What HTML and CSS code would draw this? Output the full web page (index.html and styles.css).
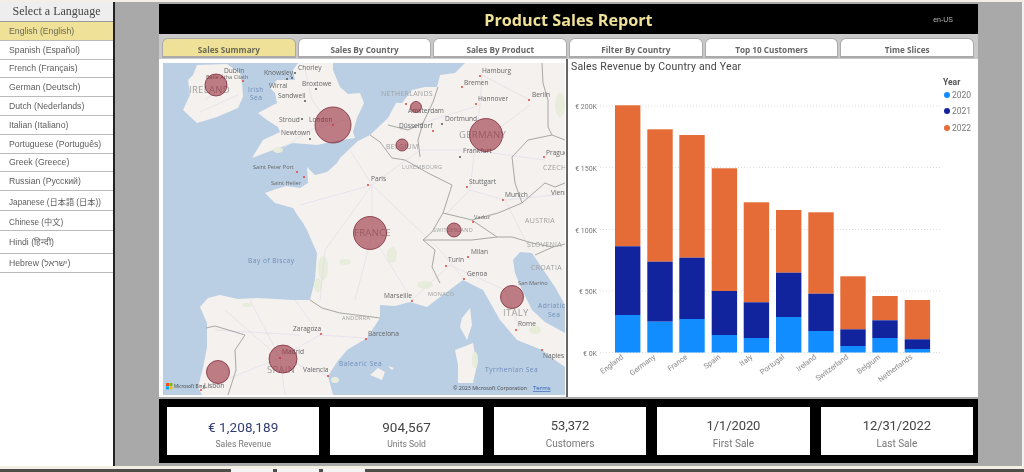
FILE: index.html
```html
<!DOCTYPE html>
<html lang="en">
<head>
    <meta charset="UTF-8">
    <meta name="viewport" content="width=device-width, initial-scale=1.0">
    <title>Product Sales Report</title>
    <link rel="stylesheet" href="styles.css">
</head>
<body>

    <div class="app">
        <aside class="lang-panel">
            <div class="lang-title">Select a Language</div>
            <a class="lang-item active">English (English)</a>
            <a class="lang-item">Spanish (Español)</a>
            <a class="lang-item">French (Français)</a>
            <a class="lang-item">German (Deutsch)</a>
            <a class="lang-item">Dutch (Nederlands)</a>
            <a class="lang-item">Italian (Italiano)</a>
            <a class="lang-item">Portuguese (Português)</a>
            <a class="lang-item">Greek (Greece)</a>
            <a class="lang-item">Russian (Русский)</a>
            <a class="lang-item tall">Japanese (日本語 (日本))</a>
            <a class="lang-item tall">Chinese (中文)</a>
            <a class="lang-item taller">Hindi (हिन्दी)</a>
            <a class="lang-item">Hebrew (ישראל)</a>
        </aside>

        <main class="stage">
            <div class="report">
                <header class="report-header">
                    <h1>Product Sales Report</h1>
                    <span class="locale">en-US</span>
                </header>

                <nav class="tabs">
                    <a class="tab active">Sales Summary</a>
                    <a class="tab">Sales By Country</a>
                    <a class="tab">Sales By Product</a>
                    <a class="tab">Filter By Country</a>
                    <a class="tab">Top 10 Customers</a>
                    <a class="tab">Time Slices</a>
                </nav>

                <section class="visuals">
                    <div class="map-frame">
                        <svg class="map" viewBox="163 63 402 332" width="402" height="332">
                            <rect class="water" x="163" y="63" width="402" height="332"/>

                            <!-- land -->
                            <path class="land" d="M465 63 L455 73 L440 75 L437 87 L425 87 L412 90 L402 103 L396 103 L388 118 L370 135 L358 141 L340 158 L337 163 L327 172 L315 175 L307 167 L308 183 L300 188 L286 186 L273 190 L265 193 L275 203 L293 208 L298 216 L303 223 L307 230 L317 253 L315 280 L310 300 L293 300 L275 299 L257 298 L238 299 L220 295 L208 298 L200 307 L207 323 L207 347 L203 368 L198 387 L202 395 L333 395 L328 376 L337 362 L347 350 L367 338 L380 318 L380 305 L395 306 L410 302 L427 307 L440 297 L463 280 L483 290 L500 320 L517 340 L542 350 L552 358 L565 367 L565 63 Z"/>
                            <path class="land" d="M298 63 L333 63 L333 70 L340 87 L348 94 L360 93 L364 103 L357 118 L353 132 L355 138 L335 141 L317 145 L293 143 L273 150 L252 158 L263 140 L280 132 L278 127 L267 120 L258 113 L277 103 L275 93 L270 88 L277 80 L295 80 L293 70 Z"/>
                            <path class="land" d="M197 65 L193 75 L188 80 L190 95 L183 110 L197 123 L217 117 L238 108 L243 97 L242 83 L240 73 L227 64 Z"/>
                            <path class="land" d="M470 308 L472 325 L467 340 L460 327 L462 318 Z"/>
                            <path class="land" d="M455 350 L473 343 L477 365 L473 383 L458 383 L458 365 Z"/>
                            <path class="land" d="M378 368 L370 375 L382 380 L385 372 Z"/>
                            <path class="land" d="M388 366 L394 368 L392 370 Z"/>
                            <path class="water" d="M513 260 L520 252 L532 253 L540 265 L555 287 L565 305 L565 333 L545 322 L532 310 L522 290 L515 273 Z"/>

                            <!-- green patches -->
                            <g class="green">
                                <ellipse cx="323" cy="268" rx="5" ry="12"/>
                                <ellipse cx="318" cy="285" rx="4" ry="7"/>
                                <ellipse cx="345" cy="262" rx="6" ry="3"/>
                                <ellipse cx="392" cy="255" rx="5" ry="8"/>
                                <ellipse cx="425" cy="285" rx="8" ry="4"/>
                                <ellipse cx="335" cy="380" rx="4" ry="3"/>
                                <ellipse cx="475" cy="360" rx="3" ry="8"/>
                                <ellipse cx="535" cy="330" rx="6" ry="4"/>
                                <ellipse cx="560" cy="105" rx="5" ry="12"/>
                                <ellipse cx="247" cy="305" rx="5" ry="2"/>
                                <ellipse cx="278" cy="150" rx="5" ry="3"/>
                            </g>

                            <!-- roads -->
                            <path class="roads" d="M205 100 L225 85 M200 112 L238 95 M280 150 L310 130 L345 120 M305 70 L312 100 L330 125 M350 150 L372 185 L372 235 L355 300 M372 185 L420 150 L470 150 L530 105 M372 185 L300 205 M372 185 L325 250 L320 300 M372 185 L440 250 L464 279 M400 130 L480 105 L482 75 M480 105 L470 190 L505 200 M482 75 L530 100 M470 150 L545 160 M470 190 L445 215 M372 235 L412 300 M412 300 L450 265 L505 290 L520 330 M225 310 L280 358 L320 335 L365 338 M280 358 L205 388 M280 358 L328 376 M280 358 L250 300 M280 358 L285 395 M320 335 L295 300 M215 330 L300 335 M505 200 L555 195 M505 200 L530 250"/>

                            <!-- borders -->
                            <path class="border-line" d="M310 300 L322 308 L340 313 L365 316 L380 318 M206 328 L215 326 L235 332 L245 335 L235 350 L236 370 L228 395 M370 135 L380 142 L392 158 L405 160 L428 173 L452 185 L443 213 L432 232 L423 240 L435 250 L432 267 L440 283 M443 213 L472 220 L498 213 L522 203 L515 183 L512 157 L528 140 L552 135 L565 140 M542 63 L543 83 L548 100 L548 127 L552 135 M438 87 L433 102 L423 123 L418 140 L420 157 M388 125 L408 130 L423 123 M423 240 L445 240 L472 240 L497 237 L512 237 L532 243 L553 247 L565 244 M472 220 L497 237 M522 203 L545 183 L555 187 L565 183 M535 255 L553 247"/>

                            <!-- place labels -->
                            <g class="place">
                                <text x="224" y="73">Dublin</text>
                                <text x="206" y="79" class="tiny">Baile Átha Cliath</text>
                                <text x="264" y="75">Knowsley</text>
                                <text x="298" y="70">Chorley</text>
                                <text x="269" y="88">Wirral</text>
                                <text x="302" y="86">Broxtowe</text>
                                <text x="278" y="98">Sandwell</text>
                                <text x="279" y="122">Stroud</text>
                                <text x="309" y="122">London</text>
                                <text x="281" y="135">Newtown</text>
                                <text x="253" y="169" class="tiny">Saint Peter Port</text>
                                <text x="271" y="185" class="tiny">Saint Helier</text>
                                <text x="482" y="73">Hamburg</text>
                                <text x="464" y="85">Bremen</text>
                                <text x="478" y="101">Hannover</text>
                                <text x="532" y="97">Berlin</text>
                                <text x="408" y="113">Amsterdam</text>
                                <text x="445" y="121">Dortmund</text>
                                <text x="399" y="128">Düsseldorf</text>
                                <text x="463" y="153">Frankfurt</text>
                                <text x="546" y="155">Prague</text>
                                <text x="371" y="181">Paris</text>
                                <text x="469" y="184">Stuttgart</text>
                                <text x="505" y="197">Munich</text>
                                <text x="551" y="195">Vienna</text>
                                <text x="474" y="219" class="tiny">Vaduz</text>
                                <text x="471" y="254">Milan</text>
                                <text x="448" y="262">Turin</text>
                                <text x="467" y="276">Genoa</text>
                                <text x="518" y="285" class="tiny">San Marino</text>
                                <text x="384" y="298">Marseille</text>
                                <text x="518" y="326">Rome</text>
                                <text x="368" y="336">Barcelona</text>
                                <text x="543" y="358">Naples</text>
                                <text x="293" y="331">Zaragoza</text>
                                <text x="282" y="354">Madrid</text>
                                <text x="303" y="372">Valencia</text>
                                <text x="204" y="388">Lisbon</text>
                            </g>
                            <g class="country">
                                <text x="189" y="93" class="big">IRELAND</text>
                                <text x="381" y="96">NETHERLANDS</text>
                                <text x="386" y="149">BELGIUM</text>
                                <text x="459" y="138" class="big">GERMANY</text>
                                <text x="402" y="169" class="small">LUXEMBOURG</text>
                                <text x="543" y="170">CZECH</text>
                                <text x="525" y="223">AUSTRIA</text>
                                <text x="433" y="232" class="small">SWITZERLAND</text>
                                <text x="354" y="236" class="big">FRANCE</text>
                                <text x="527" y="247">SLOVENIA</text>
                                <text x="531" y="270">CROATIA</text>
                                <text x="428" y="296" class="small">MONACO</text>
                                <text x="342" y="320" class="small">ANDORRA</text>
                                <text x="503" y="316" class="big">ITALY</text>
                                <text x="267" y="373" class="big">SPAIN</text>
                            </g>
                            <g class="sea">
                                <text x="248" y="92">Irish</text>
                                <text x="250" y="100">Sea</text>
                                <text x="248" y="263">Bay of Biscay</text>
                                <text x="538" y="308">Adriatic</text>
                                <text x="548" y="317">Sea</text>
                                <text x="339" y="366">Balearic Sea</text>
                                <text x="485" y="372">Tyrrhenian Sea</text>
                            </g>

                            <!-- city dots -->
                            <g class="dot-red">
                                <circle cx="243" cy="81" r="1"/><circle cx="297" cy="172" r="1"/><circle cx="304" cy="177" r="1"/>
                                <circle cx="480" cy="76" r="1"/><circle cx="462" cy="87" r="1"/><circle cx="476" cy="104" r="1"/>
                                <circle cx="529" cy="100" r="1"/><circle cx="406" cy="104" r="1"/><circle cx="433" cy="131" r="1"/>
                                <circle cx="544" cy="157" r="1"/><circle cx="368" cy="185" r="1"/><circle cx="467" cy="187" r="1"/>
                                <circle cx="503" cy="200" r="1"/><circle cx="473" cy="222" r="1"/><circle cx="468" cy="257" r="1"/>
                                <circle cx="446" cy="266" r="1"/><circle cx="464" cy="279" r="1"/><circle cx="412" cy="301" r="1"/>
                                <circle cx="516" cy="330" r="1"/><circle cx="366" cy="339" r="1"/><circle cx="542" cy="350" r="1"/>
                                <circle cx="321" cy="334" r="1"/><circle cx="328" cy="376" r="1"/><circle cx="201" cy="390" r="1"/>
                            </g>
                            <g class="dot-dark">
                                <circle cx="295" cy="73" r="1"/><circle cx="287" cy="79" r="1"/><circle cx="292" cy="78" r="1"/>
                                <circle cx="316" cy="89" r="1"/><circle cx="305" cy="101" r="1"/><circle cx="302" cy="119" r="1"/>
                                <circle cx="310" cy="139" r="1"/><circle cx="442" cy="124" r="1"/><circle cx="460" cy="157" r="1"/>
                            </g>

                            <!-- revenue bubbles -->
                            <g class="bubble">
                                <circle cx="216" cy="85" r="11"/>
                                <circle cx="333" cy="125" r="18"/>
                                <circle cx="416" cy="107" r="5.5"/>
                                <circle cx="402" cy="145" r="6"/>
                                <circle cx="486" cy="135" r="16.5"/>
                                <circle cx="370" cy="233" r="16.5"/>
                                <circle cx="454" cy="230" r="7"/>
                                <circle cx="512" cy="297" r="11.5"/>
                                <circle cx="283" cy="359" r="14"/>
                                <circle cx="218" cy="372" r="11.5"/>
                            </g>
                            <circle class="centre" cx="333" cy="125" r="1"/>
                            <circle class="centre" cx="280" cy="358" r="1"/>

                            <!-- bing logo and credit -->
                            <rect x="166" y="383" width="3" height="3" fill="#f25022"/>
                            <rect x="169.400" y="383" width="3" height="3" fill="#7fba00"/>
                            <rect x="166" y="386.400" width="3" height="3" fill="#00a4ef"/>
                            <rect x="169.400" y="386.400" width="3" height="3" fill="#ffb900"/>
                            <text class="credit bing" x="174" y="388">Microsoft Bing</text>
                            <text class="credit" x="453" y="390">© 2023 Microsoft Corporation</text>
                            <text class="terms" x="533" y="390">Terms</text>
                        </svg>
                    </div>

                    <div class="chart-frame">
                        <h2 class="chart-title">Sales Revenue by Country and Year</h2>
                        <svg class="chart" viewBox="569 59 409 338" width="409" height="338">
                            <g class="grid-line">
                                <line x1="600" x2="942" y1="106" y2="106"/>
                                <line x1="600" x2="942" y1="167.500" y2="167.500"/>
                                <line x1="600" x2="942" y1="229.500" y2="229.500"/>
                                <line x1="600" x2="942" y1="291" y2="291"/>
                                <line x1="600" x2="942" y1="352.500" y2="352.500"/>
                            </g>
                            <g class="y-label">
                                <text x="597" y="109">€ 200K</text>
                                <text x="597" y="170.500">€ 150K</text>
                                <text x="597" y="232.500">€ 100K</text>
                                <text x="597" y="294">€ 50K</text>
                                <text x="597" y="355.500">€ 0K</text>
                            </g>

                            <!-- 2022 -->
                            <g fill="#e66c37">
                                <rect x="615" y="105.300" width="25.400" height="141"/>
                                <rect x="647.300" y="129.300" width="25.400" height="132.400"/>
                                <rect x="679.300" y="135" width="25.400" height="122.700"/>
                                <rect x="711.700" y="168.300" width="25.400" height="122.700"/>
                                <rect x="743.700" y="202.300" width="25.400" height="100"/>
                                <rect x="776" y="210" width="25.400" height="62.700"/>
                                <rect x="808.300" y="212.300" width="25.400" height="81.400"/>
                                <rect x="840.300" y="276.300" width="25.400" height="53"/>
                                <rect x="872.300" y="296" width="25.400" height="24.300"/>
                                <rect x="904.700" y="300" width="25.400" height="39.300"/>
                            </g>
                            <!-- 2021 -->
                            <g fill="#12239e">
                                <rect x="615" y="246.300" width="25.400" height="68.700"/>
                                <rect x="647.300" y="261.700" width="25.400" height="60"/>
                                <rect x="679.300" y="257.700" width="25.400" height="61.300"/>
                                <rect x="711.700" y="291" width="25.400" height="44"/>
                                <rect x="743.700" y="302.300" width="25.400" height="35.700"/>
                                <rect x="776" y="272.700" width="25.400" height="44.300"/>
                                <rect x="808.300" y="293.700" width="25.400" height="37.300"/>
                                <rect x="840.300" y="329.300" width="25.400" height="16.700"/>
                                <rect x="872.300" y="320.300" width="25.400" height="17.700"/>
                                <rect x="904.700" y="339.300" width="25.400" height="9.700"/>
                            </g>
                            <!-- 2020 -->
                            <g fill="#118dff">
                                <rect x="615" y="315" width="25.400" height="37.500"/>
                                <rect x="647.300" y="321.700" width="25.400" height="30.800"/>
                                <rect x="679.300" y="319" width="25.400" height="33.500"/>
                                <rect x="711.700" y="335" width="25.400" height="17.500"/>
                                <rect x="743.700" y="338" width="25.400" height="14.500"/>
                                <rect x="776" y="317" width="25.400" height="35.500"/>
                                <rect x="808.300" y="331" width="25.400" height="21.500"/>
                                <rect x="840.300" y="346" width="25.400" height="6.500"/>
                                <rect x="872.300" y="338" width="25.400" height="14.500"/>
                                <rect x="904.700" y="349" width="25.400" height="3.500"/>
                            </g>

                            <g class="x-label">
                                <text transform="translate(624 358) rotate(-37)">England</text>
                                <text transform="translate(656 358) rotate(-37)">Germany</text>
                                <text transform="translate(688 358) rotate(-37)">France</text>
                                <text transform="translate(721 358) rotate(-37)">Spain</text>
                                <text transform="translate(753 358) rotate(-37)">Italy</text>
                                <text transform="translate(785 358) rotate(-37)">Portugal</text>
                                <text transform="translate(817 358) rotate(-37)">Ireland</text>
                                <text transform="translate(849 358) rotate(-37)">Switzerland</text>
                                <text transform="translate(881 358) rotate(-37)">Belgium</text>
                                <text transform="translate(913 358) rotate(-37)">Netherlands</text>
                            </g>

                            <text class="legend-title" x="943" y="85">Year</text>
                            <circle cx="947" cy="95" r="3" fill="#118dff"/>
                            <circle cx="947" cy="111" r="3" fill="#12239e"/>
                            <circle cx="947" cy="128" r="3" fill="#e66c37"/>
                            <text class="legend-item" x="952" y="98">2020</text>
                            <text class="legend-item" x="952" y="114">2021</text>
                            <text class="legend-item" x="952" y="131">2022</text>
                        </svg>
                    </div>
                </section>

                <section class="kpis">
                    <div class="kpi revenue">
                        <div class="kpi-value">€ 1,208,189</div>
                        <div class="kpi-label">Sales Revenue</div>
                    </div>
                    <div class="kpi">
                        <div class="kpi-value">904,567</div>
                        <div class="kpi-label">Units Sold</div>
                    </div>
                    <div class="kpi large">
                        <div class="kpi-value">53,372</div>
                        <div class="kpi-label">Customers</div>
                    </div>
                    <div class="kpi large">
                        <div class="kpi-value">1/1/2020</div>
                        <div class="kpi-label">First Sale</div>
                    </div>
                    <div class="kpi large">
                        <div class="kpi-value">12/31/2022</div>
                        <div class="kpi-label">Last Sale</div>
                    </div>
                </section>
            </div>
        </main>
    </div>

    <footer class="taskbar">
        <span class="task"></span>
        <span class="task"></span>
        <span class="task"></span>
    </footer>

</body>
</html>
```

FILE: styles.css
```css
html, body {
    height: 100%;
}

body {
    margin: 0;
    overflow: hidden;
    background-color: #f4efe4;
    font-family: "Liberation Sans", sans-serif;
}

.app {
    display: flex;
    height: 464px;
    margin-top: 2px;
    filter: blur(0.4px);
}

/* language list */
.lang-panel {
    display: flex;
    flex-direction: column;
    flex: none;
    width: 113px;
    background-color: #fff;
    border-right: 2px solid #222;
}

.lang-title {
    flex: none;
    height: 20px;
    line-height: 19px;
    text-align: center;
    background-color: #eee;
    border-bottom: 1px solid #999;
    color: #444;
    font-family: "Liberation Serif", serif;
    font-size: 12px;
    box-sizing: border-box;
}

.lang-item {
    flex: none;
    display: flex;
    align-items: center;
    box-sizing: border-box;
    height: 18.800px;
    padding-left: 9px;
    border-bottom: 1px solid #bbb;
    color: #5c5c5c;
    font-size: 8.700px;
    font-family: "Liberation Sans", "Noto Sans CJK JP", sans-serif;
    white-space: nowrap;
}

.lang-item.tall {
    height: 20px;
    font-size: 8.200px;
}

.lang-item.taller {
    height: 23px;
}

.lang-item.active {
    background-color: #efe197;
    color: #6a6a55;
}

/* report area */
.stage {
    flex: 1;
    box-sizing: border-box;
    padding: 2px 44px 0 44px;
    background-color: #a9a9a9;
    border-right: 2px solid #f0f0f0;
}

.report {
    display: flex;
    flex-direction: column;
    width: 819px;
}

.report-header {
    display: grid;
    grid-template-columns: 1fr auto 1fr;
    align-items: center;
    height: 30px;
    background-color: #000;
}

.report-header h1 {
    grid-column: 2;
    margin: 2px 0 0;
    color: #efe197;
    font-family: "Open Sans", sans-serif;
    font-size: 16.200px;
    font-weight: 700;
}

.locale {
    justify-self: end;
    margin-right: 25px;
    color: #bbb;
    font-size: 7px;
}

.tabs {
    display: flex;
    gap: 2px;
    height: 25px;
    box-sizing: border-box;
    padding: 4px 4px 1px 3px;
    background-color: #c9c9c9;
}

.tab {
    flex: 1;
    box-sizing: border-box;
    height: 20px;
    line-height: 21px;
    text-align: center;
    background-color: #fff;
    border: 1px solid #aaa;
    border-bottom-width: 2px;
    border-radius: 6px 6px 0 0;
    color: #666;
    font-family: "Open Sans", sans-serif;
    font-size: 8.200px;
    font-weight: 700;
}

.tab.active {
    background-color: #efe197;
    color: #6a6a55;
}

.visuals {
    display: flex;
    height: 338px;
    background-color: #fff;
}

.map-frame {
    flex: none;
    width: 407px;
    box-sizing: border-box;
    padding: 4px 1px 2px 4px;
}

.map {
    display: block;
    font-family: "Open Sans", sans-serif;
}

.map .water { fill: #bacfe4; }
.map .land { fill: #f4f1ee; }
.map .green ellipse { fill: #e7edda; }
.map .roads { fill: none; stroke: #e3dcea; stroke-width: 0.7; }
.map .border-line { fill: none; stroke: #a8a8a5; stroke-width: 1; }

.place text { fill: #666; font-size: 6.600px; }
.place text.tiny { font-size: 5.600px; }
.country text { fill: #a0a0a0; font-size: 7px; letter-spacing: 0.3px; }
.country text.big { font-size: 9.500px; }
.country text.small { font-size: 5.500px; }
.sea text { fill: #6f8db8; font-size: 6.600px; letter-spacing: 0.5px; }

.dot-red circle { fill: #e0423a; }
.dot-dark circle { fill: #555; }

.bubble circle {
    fill: rgba(150, 40, 55, 0.58);
    stroke: #7d2d3a;
    stroke-width: 0.8;
}

.map .centre { fill: #d9303a; }
.map .credit { fill: #444; font-size: 5.300px; }
.map .credit.bing { font-size: 4.600px; }
.map .terms { fill: #2a55b0; font-size: 6px; text-decoration: underline; }

.chart-frame {
    position: relative;
    flex: 1;
    border-left: 2px solid #666;
}

.chart-title {
    position: absolute;
    top: 1px;
    left: 3px;
    margin: 0;
    color: #444;
    font-family: "Roboto", sans-serif;
    font-size: 10.500px;
    font-weight: 400;
    letter-spacing: 0.2px;
    white-space: nowrap;
}

.chart {
    display: block;
    margin-left: 1px;
    font-family: "Roboto", sans-serif;
}

.grid-line line {
    stroke: #ddd;
    stroke-width: 1;
    stroke-dasharray: 1 2;
}

.y-label text {
    fill: #777;
    font-size: 7px;
    text-anchor: end;
}

.x-label text {
    fill: #888;
    font-size: 7.500px;
    text-anchor: end;
}

.legend-title {
    fill: #555;
    font-size: 8.500px;
    font-weight: 700;
}

.legend-item {
    fill: #777;
    font-size: 8.500px;
}

/* kpi cards */
.kpis {
    display: flex;
    gap: 11px;
    height: 64px;
    box-sizing: border-box;
    margin-top: 2px;
    padding: 8px 5px 8px 8px;
    background-color: #000;
}

.kpi {
    flex: 1;
    display: flex;
    flex-direction: column;
    align-items: center;
    background-color: #fff;
    font-family: "Roboto", sans-serif;
}

.kpi-value {
    margin-top: 12px;
    color: #444;
    font-size: 13.500px;
    letter-spacing: 0.1px;
}

.kpi-label {
    margin-top: 4px;
    color: #777;
    font-size: 8.600px;
}

.kpi.revenue .kpi-value {
    color: #333c70;
}

.kpi.large .kpi-value {
    margin-top: 11px;
    font-size: 13px;
    letter-spacing: -0.1px;
}

.kpi.large .kpi-label {
    margin-top: 5px;
    font-size: 10px;
}

.taskbar {
    display: flex;
    gap: 4px;
    box-sizing: border-box;
    height: 3px;
    margin-top: 3px;
    padding-left: 231px;
    background-color: #4d4d4a;
}

.task {
    width: 42px;
    background-color: #f4f4f4;
}
```
